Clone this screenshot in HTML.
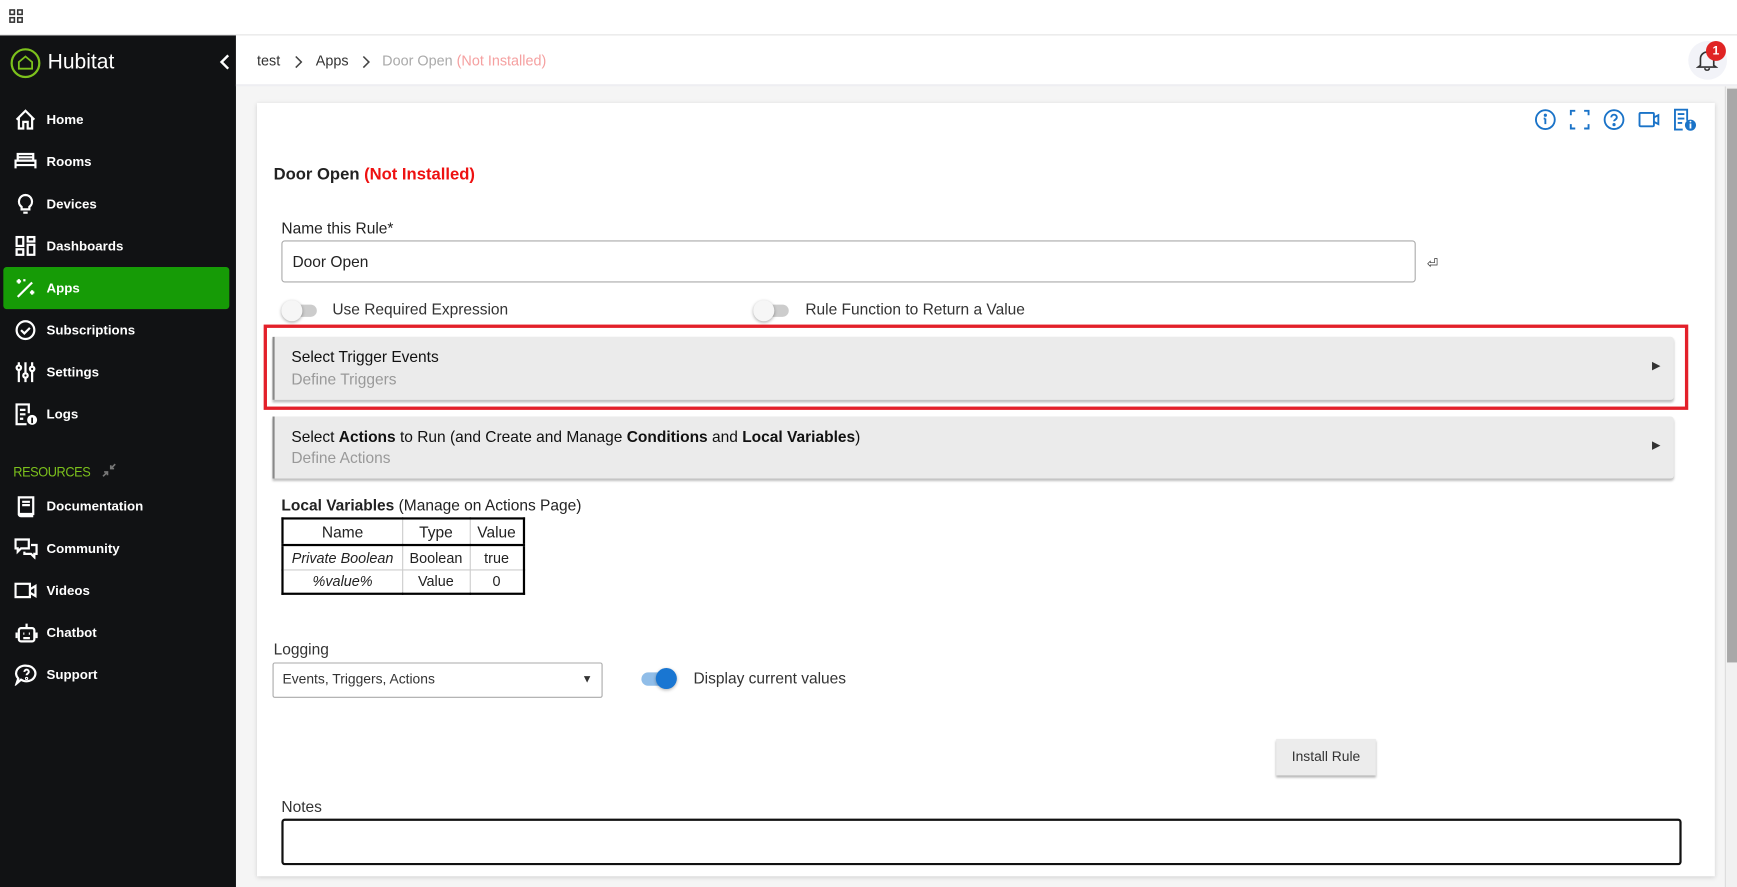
<!DOCTYPE html>
<html><head><meta charset="utf-8">
<style>
*{box-sizing:border-box;margin:0;padding:0}
html,body{width:1737px;height:887px;overflow:hidden;background:#f5f5f5}
#w{position:absolute;left:0;top:0;width:1568px;height:801px;transform:scale(1.10778);transform-origin:0 0;font-family:"Liberation Sans",Arial,sans-serif;color:#222}
.a{position:absolute}
#top{left:0;top:0;width:1568px;height:32px;background:#fff;border-bottom:1px solid #e2e2e2}
#side{left:0;top:32px;width:213px;height:769px;background:#111214}
.nav{position:absolute;left:0;width:213px;height:38px;color:#fff;font-size:12px;font-weight:bold;line-height:38px}
.nav span{position:absolute;left:42px}
.nav svg{position:absolute;left:13px;top:9px}
#hdr{left:213px;top:32px;width:1355px;height:46px;background:#fff;border-bottom:2px solid #eeeef2}
#card{left:232px;top:93px;width:1316px;height:698px;background:#fff;box-shadow:0 1px 4px rgba(0,0,0,.15)}
.t{position:absolute;white-space:nowrap}
.tog{position:absolute;width:30px;height:11px;border-radius:6px;background:#ccc}
.tog i{position:absolute;left:-2px;top:-4px;width:19px;height:19px;border-radius:50%;background:#f6f6f6;box-shadow:0 1px 3px rgba(0,0,0,.35)}
.sec{position:absolute;left:246px;width:1265px;background:#ebebeb;border-left:2px solid #888;box-shadow:0 2px 2px rgba(0,0,0,.25);border-radius:0 3px 3px 0}
.sec .l1{position:absolute;left:15px;top:10px;font-size:14px;color:#111}
.sec .l2{position:absolute;left:15px;top:30px;font-size:14px;color:#999}
.sec .ar{position:absolute;right:12px;top:21px;font-size:10px;color:#333}
table{border-collapse:collapse;font-size:14px}
td{border:1px solid #ccc;text-align:center;height:22px;padding:0 5px}
</style></head><body><div id="w">
<div class="a" id="top"><svg class="a" style="left:8px;top:8px" width="13" height="13" viewBox="0 0 13 13" fill="none" stroke="#333" stroke-width="1.4"><rect x="1" y="1" width="4" height="4"/><rect x="8" y="1" width="4" height="4"/><rect x="1" y="8" width="4" height="4"/><rect x="8" y="8" width="4" height="4"/></svg></div>

<div class="a" id="side">
 <svg class="a" style="left:9px;top:11px" width="28" height="28" viewBox="0 0 28 28" fill="none" stroke="#7cc11c" stroke-width="2"><circle cx="14" cy="14" r="12.5"/><path d="M8 19V13l6-5 6 5v6z" stroke-width="1.6"/></svg>
 <div class="t" style="left:43px;top:14px;font-size:19px;color:#fff">Hubitat</div>
 <svg class="a" style="left:198px;top:16px" width="10" height="16" viewBox="0 0 10 16" fill="none" stroke="#fff" stroke-width="2.2"><path d="M8 2L2 8l6 6"/></svg>

 <div class="nav" style="top:57px"><svg width="20" height="20" viewBox="0 0 20 20" fill="none" stroke="#fff" stroke-width="2"><path d="M2 10L10 2l8 8M4 8v10h4v-6h4v6h4V8"/></svg><span>Home</span></div>
 <div class="nav" style="top:95px"><svg width="20" height="20" viewBox="0 0 20 20" fill="none" stroke="#fff" stroke-width="2"><path d="M3 9V3h14v6M1 16V9h18v7M1 13h18M4 6h12"/></svg><span>Rooms</span></div>
 <div class="nav" style="top:133px"><svg width="20" height="20" viewBox="0 0 20 20" fill="none" stroke="#fff" stroke-width="2"><path d="M10 2a6 6 0 00-3.5 10.8V15h7v-2.2A6 6 0 0010 2zM8 18h4"/></svg><span>Devices</span></div>
 <div class="nav" style="top:171px"><svg width="20" height="20" viewBox="0 0 20 20" fill="none" stroke="#fff" stroke-width="2"><rect x="2" y="2" width="6" height="8"/><rect x="12" y="2" width="6" height="4"/><rect x="2" y="13" width="6" height="5"/><rect x="12" y="9" width="6" height="9"/></svg><span>Dashboards</span></div>
 <div class="nav" style="top:209px;left:3px;width:204px;background:#169b06;border-radius:3px"><svg style="left:10px" width="20" height="20" viewBox="0 0 20 20" fill="none" stroke="#fff" stroke-width="2"><path d="M3 18L16 5M2 4h4M4 2v4M14 14h4M16 12v4M9 2v2"/></svg><span style="left:39px">Apps</span></div>
 <div class="nav" style="top:247px"><svg width="20" height="20" viewBox="0 0 20 20" fill="none" stroke="#fff" stroke-width="2"><circle cx="10" cy="10" r="8"/><path d="M6 10l3 3 5-5"/></svg><span>Subscriptions</span></div>
 <div class="nav" style="top:285px"><svg width="20" height="20" viewBox="0 0 20 20" fill="none" stroke="#fff" stroke-width="2"><path d="M4 1v18M10 1v18M16 1v18"/><circle cx="4" cy="6" r="2" fill="#111"/><circle cx="10" cy="13" r="2" fill="#111"/><circle cx="16" cy="7" r="2" fill="#111"/></svg><span>Settings</span></div>
 <div class="nav" style="top:323px"><svg width="22" height="20" viewBox="0 0 22 20" fill="none" stroke="#fff" stroke-width="2"><path d="M13 9V1H2v18h9M5 6h5M5 10h5M5 14h3"/><circle cx="16" cy="15" r="4.5" fill="#fff" stroke="none"/><path d="M16 13v5" stroke="#111" stroke-width="1.6"/></svg><span>Logs</span></div>

 <div class="t" style="left:12px;top:387px;font-size:12.5px;color:#7cc11c;letter-spacing:-0.4px;transform:scaleX(0.92);transform-origin:0 0">RESOURCES</div>
 <svg class="a" style="left:92px;top:386px" width="13" height="13" viewBox="0 0 13 13" fill="none" stroke="#777" stroke-width="1.5"><path d="M1 12l4-4M2 8h3v3M12 1L8 5M8 2v3h3"/></svg>
 <div class="nav" style="top:406px"><svg width="20" height="20" viewBox="0 0 20 20" fill="none" stroke="#fff" stroke-width="2"><path d="M4 17V2h13v15zM4 17a2 2 0 002 2h11M7 6h7M7 9h7"/></svg><span>Documentation</span></div>
 <div class="nav" style="top:444px"><svg width="22" height="20" viewBox="0 0 22 20" fill="none" stroke="#fff" stroke-width="2"><path d="M1 2h12v8H6l-3 3v-3H1zM15 7h5v8h-2v3l-3-3H9v-2"/></svg><span>Community</span></div>
 <div class="nav" style="top:482px"><svg width="22" height="20" viewBox="0 0 22 20" fill="none" stroke="#fff" stroke-width="2"><rect x="1" y="4" width="13" height="12"/><path d="M14 9l5-3v9l-5-3"/></svg><span>Videos</span></div>
 <div class="nav" style="top:520px"><svg width="22" height="20" viewBox="0 0 22 20" fill="none" stroke="#fff" stroke-width="2"><rect x="4" y="6" width="14" height="12" rx="2"/><path d="M11 2v4M2 10v5M20 10v5"/><path d="M8 11h1M13 11h1M8 15h6" stroke-width="2"/></svg><span>Chatbot</span></div>
 <div class="nav" style="top:558px"><svg width="22" height="20" viewBox="0 0 22 20" fill="none" stroke="#fff" stroke-width="2"><path d="M11 2a8 7 0 11-5 12.5L2 18l1.5-4.5A8 7 0 0111 2z"/><path d="M9 7.5a2 2 0 114 0c0 1.5-2 1.5-2 3" stroke-width="1.8"/><circle cx="11" cy="13.5" r=".5"/></svg><span>Support</span></div>
</div>

<div class="a" id="hdr">
 <div class="t" style="left:19px;top:15px;font-size:13px;color:#333">test</div>
 <svg class="a" style="left:52px;top:18px" width="8" height="12" viewBox="0 0 8 12" fill="none" stroke="#444" stroke-width="1.4"><path d="M2 1l5 5-5 5"/></svg>
 <div class="t" style="left:72px;top:15px;font-size:13px;color:#333">Apps</div>
 <svg class="a" style="left:113px;top:18px" width="8" height="12" viewBox="0 0 8 12" fill="none" stroke="#444" stroke-width="1.4"><path d="M2 1l5 5-5 5"/></svg>
 <div class="t" style="left:132px;top:15px;font-size:13px;color:#aaa">Door Open <span style="color:#f5a0a0">(Not Installed)</span></div>
 <div class="a" style="left:1311px;top:5px;width:35px;height:35px;border-radius:50%;background:#f2f3f8"></div>
 <svg class="a" style="left:1318px;top:12px" width="20" height="20" viewBox="0 0 20 20" fill="none" stroke="#333" stroke-width="1.5"><path d="M4 15V9a6 6 0 0112 0v6l2 1.5H2zM8 17.5a2 2 0 004 0"/></svg>
 <div class="a" style="left:1327px;top:5px;width:18px;height:18px;border-radius:50%;background:#e02424;color:#fff;font-size:11px;font-weight:bold;text-align:center;line-height:18px">1</div>
</div>
<div class="a" style="left:1557px;top:78px;width:11px;height:723px;background:#f1f1f1;border-left:1px solid #ddd"></div>
<div class="a" style="left:1559px;top:80px;width:9px;height:518px;background:#a8a8a8"></div>

<div class="a" id="card"></div>
<svg class="a" style="left:1385px;top:98px" width="152" height="22" viewBox="0 0 152 22" fill="none" stroke="#1a73c8" stroke-width="1.7">
 <circle cx="10" cy="10" r="8.5"/><path d="M10 9v5M8.5 9H10" /><circle cx="10" cy="6" r=".6" fill="#1a73c8"/>
 <path d="M33 6V2h4M45 2h4v4M49 14v4h-4M37 18h-4v-4"/>
 <circle cx="72" cy="10" r="8.5"/><path d="M69.5 8a2.5 2.5 0 115 0c0 2-2.5 2-2.5 3.5"/><circle cx="72" cy="14.5" r=".6" fill="#1a73c8"/>
 <rect x="95" y="4" width="13" height="12" rx="1"/><path d="M108 8l4-2v8l-4-2"/>
 <path d="M138 11V1h-11v18h7M129.5 5h6M129.5 9h6M129.5 13h4"/>
 <circle cx="141" cy="15" r="5" fill="#1a73c8" stroke="none"/><path d="M141 13.5v4.5" stroke="#fff" stroke-width="1.6"/><circle cx="141" cy="11.8" r=".8" fill="#fff" stroke="none"/>
</svg>

<div class="t" style="left:247px;top:149px;font-size:15px;font-weight:bold;color:#222">Door Open <span style="color:#ee1111">(Not Installed)</span></div>
<div class="t" style="left:254px;top:198px;font-size:14px">Name this Rule*</div>
<div class="a" style="left:254px;top:217px;width:1024px;height:38px;border:1px solid #aaa;border-radius:3px"></div>
<div class="t" style="left:264px;top:228px;font-size:14px">Door Open</div>
<div class="t" style="left:1288px;top:231px;font-size:12px;color:#333">⏎</div>

<div class="tog" style="left:256px;top:275px"><i></i></div>
<div class="t" style="left:300px;top:271px;font-size:14px;color:#333">Use Required Expression</div>
<div class="tog" style="left:682px;top:275px"><i></i></div>
<div class="t" style="left:727px;top:271px;font-size:14px;color:#333">Rule Function to Return a Value</div>

<div class="a" style="left:238px;top:293px;width:1286px;height:77px;border:3px solid #e3202a"></div>
<div class="sec" style="top:304px;height:57px"><div class="l1">Select Trigger Events</div><div class="l2">Define Triggers</div><div class="ar">▶</div></div>
<div class="sec" style="top:376px;height:56px"><div class="l1">Select <b>Actions</b> to Run (and Create and Manage <b>Conditions</b> and <b>Local Variables</b>)</div><div class="l2" style="top:29px">Define Actions</div><div class="ar">▶</div></div>

<div class="t" style="left:254px;top:448px;font-size:14px;color:#222"><b>Local Variables</b> (Manage on Actions Page)</div>
<table class="a" style="left:254px;top:467px;border:2px solid #000">
<tr style="border-bottom:2px solid #000"><td style="width:108px;height:24px">Name</td><td style="width:61px">Type</td><td style="width:49px">Value</td></tr>
<tr><td style="font-style:italic;font-size:13px">Private Boolean</td><td style="font-size:13px">Boolean</td><td style="font-size:13px">true</td></tr>
<tr><td style="font-style:italic;font-size:13px">%value%</td><td style="font-size:13px">Value</td><td style="font-size:13px">0</td></tr>
</table>

<div class="t" style="left:247px;top:578px;font-size:14px;color:#333">Logging</div>
<div class="a" style="left:246px;top:598px;width:298px;height:32px;border:1px solid #aaa;border-radius:2px"></div>
<div class="t" style="left:255px;top:606px;font-size:12.5px;color:#333">Events, Triggers, Actions</div>
<div class="t" style="left:525px;top:608px;font-size:10px;color:#333">▼</div>
<div class="a" style="left:579px;top:607px;width:28px;height:12px;border-radius:6px;background:#90bde8"></div>
<div class="a" style="left:592px;top:603px;width:19px;height:19px;border-radius:50%;background:#1976d2;box-shadow:0 1px 3px rgba(0,0,0,.3)"></div>
<div class="t" style="left:626px;top:604px;font-size:14px;color:#333">Display current values</div>

<div class="a" style="left:1152px;top:667px;width:90px;height:33px;background:#ececec;box-shadow:0 2px 2px rgba(0,0,0,.3);font-size:12.5px;text-align:center;line-height:33px;color:#333">Install Rule</div>

<div class="t" style="left:254px;top:720px;font-size:14px;color:#333">Notes</div>
<div class="a" style="left:254px;top:739px;width:1264px;height:42px;border:2px solid #111;border-radius:3px"></div>
</div></body></html>
